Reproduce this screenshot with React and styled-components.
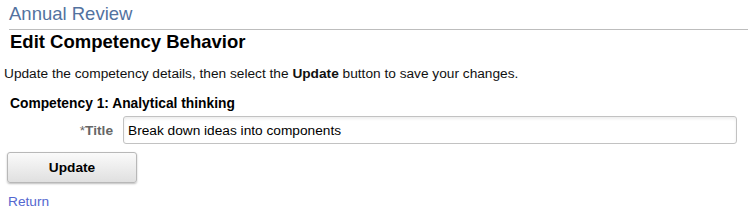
import React from "react";
import styled, { createGlobalStyle } from "styled-components";

const Global = createGlobalStyle`
  html, body { margin: 0; padding: 0; background: #fff; }
  body { font-family: "Liberation Sans", Arial, sans-serif; color: #000; }
`;

const Page = styled.div`
  width: 748px;
  height: 213px;
  overflow: hidden;
  display: flex;
  flex-direction: column;
`;

const Banner = styled.div`
  margin-left: 9px;
  border-bottom: 1px solid #bdbdbd;
  padding: 3px 0 5px 0;
`;

const AppTitle = styled.div`
  font-size: 18.5px;
  line-height: 21px;
  color: #53729f;
`;

const PageTitle = styled.h1`
  margin: 1px 0 0 10px;
  font-size: 18.5px;
  line-height: 21px;
  font-weight: bold;
`;

const Intro = styled.p`
  margin: 14px 0 0 4px;
  font-size: 13.7px;
  line-height: 16px;
  color: #111;
`;

const Section = styled.h2`
  margin: 14px 0 0 10px;
  font-size: 13.8px;
  line-height: 16px;
  font-weight: bold;
`;

const FieldRow = styled.div`
  display: flex;
  align-items: center;
  margin-top: 4px;
`;

const Label = styled.label`
  width: 123px;
  text-align: right;
  font-size: 13.7px;
  font-weight: bold;
  color: #666;
  padding-right: 10px;
  box-sizing: border-box;
`;

const Req = styled.span`
  font-weight: normal;
  color: #666;
`;

const TextInput = styled.input`
  width: 614px;
  height: 28px;
  box-sizing: border-box;
  border: 1px solid #c2c2c2;
  border-radius: 3px;
  padding: 0 4px;
  font-family: inherit;
  font-size: 13.7px;
  color: #000;
  background: #fff;
  box-shadow: inset 0 2px 3px rgba(0, 0, 0, 0.07);
  outline: none;
`;

const Button = styled.button`
  margin: 8px 0 0 7px;
  width: 130px;
  height: 31px;
  border: 1px solid #b8b8b8;
  border-radius: 3px;
  background: linear-gradient(#fafafa, #e0e0e0);
  box-shadow: 0 1px 2px rgba(0, 0, 0, 0.25);
  font-family: inherit;
  font-size: 13.7px;
  font-weight: bold;
  color: #000;
  align-self: flex-start;
`;

const ReturnLink = styled.a`
  margin: 11px 0 0 8px;
  font-size: 13.7px;
  line-height: 16px;
  color: #5467cf;
  text-decoration: none;
  align-self: flex-start;
`;

export default function App() {
  return (
    <>
      <Global />
      <Page>
        <Banner>
          <AppTitle>Annual Review</AppTitle>
        </Banner>
        <PageTitle>Edit Competency Behavior</PageTitle>
        <Intro>
          Update the competency details, then select the <b>Update</b> button to save your changes.
        </Intro>
        <Section>Competency 1: Analytical thinking</Section>
        <FieldRow>
          <Label htmlFor="title">
            <Req>*</Req>Title
          </Label>
          <TextInput id="title" defaultValue="Break down ideas into components" />
        </FieldRow>
        <Button>Update</Button>
        <ReturnLink href="#">Return</ReturnLink>
      </Page>
    </>
  );
}
